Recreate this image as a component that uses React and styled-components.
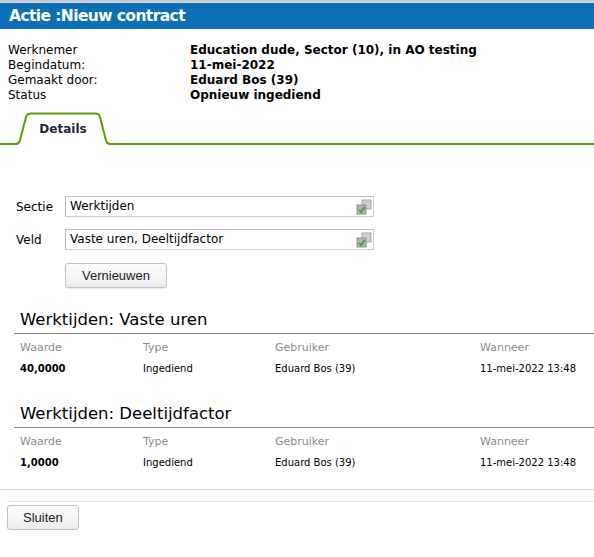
import React from 'react';
import styled, { createGlobalStyle } from 'styled-components';

const GlobalStyle = createGlobalStyle`
  html, body {
    margin: 0;
    padding: 0;
    background: #ffffff;
  }
  body {
    font-family: "DejaVu Sans", Verdana, sans-serif;
    font-size: 12px;
    color: #000000;
  }
`;

const Page = styled.div`
  width: 594px;
  border-top: 3px solid #c9ced4;
`;

const TitleBar = styled.div`
  height: 26px;
  background-color: #0b71b4;
  color: #ffffff;
  font-family: "DejaVu Sans", sans-serif;
  font-weight: bold;
  font-size: 15.5px;
  letter-spacing: -0.6px;
  line-height: 26px;
  padding-left: 9px;
`;

const InfoGrid = styled.div`
  display: grid;
  grid-template-columns: 182px 1fr;
  padding: 14px 8px 0;
  line-height: 15px;
`;

const InfoLabel = styled.div``;

const InfoValue = styled.div`
  font-weight: bold;
`;

const TabStrip = styled.div`
  display: flex;
  align-items: flex-end;
  height: 33px;
  margin-top: 9px;
`;

const TabLine = styled.div`
  flex: ${p => (p.$grow ? 1 : 'none')};
  width: ${p => (p.$grow ? 'auto' : '15px')};
  border-bottom: 2px solid #5e9b0d;
`;

const Tab = styled.div`
  position: relative;
  width: 95px;
  height: 33px;
  display: flex;
  align-items: center;
  justify-content: center;
  font-weight: bold;
  font-size: 12px;
  color: #222833;

  svg {
    position: absolute;
    inset: 0;
  }
`;

const TabLabel = styled.span`
  position: relative;
  margin-left: 1px;
`;

const Form = styled.div`
  padding: 51px 0 0 16px;
  display: flex;
  flex-direction: column;
  gap: 12px;
`;

const FieldRow = styled.div`
  display: flex;
  align-items: center;
`;

const FieldLabel = styled.label`
  width: 49px;
`;

const FieldBox = styled.div`
  position: relative;
  width: 309px;
  height: 21px;
  box-sizing: border-box;
  border: 1px solid #cfcfcf;
  border-left-color: #b9b9b9;
  border-top-color: #bdbdbd;
  padding: 2px 0 0 4px;
  line-height: 14px;
`;

const PickIcon = styled.svg`
  position: absolute;
  right: 1px;
  bottom: 1px;
`;

const Button = styled.button`
  font-family: "Liberation Sans", Arial, sans-serif;
  font-size: 13px;
  color: #222;
  height: 25px;
  padding: 0 ${p => p.$pad || 15}px;
  border: 1px solid #c4c4c4;
  border-radius: 3px;
  background: linear-gradient(#fdfdfd, #ececec);
  box-shadow: 0 1px 1px rgba(0, 0, 0, 0.08);
  cursor: pointer;
`;

const ButtonRow = styled.div`
  padding-left: 49px;
  margin-top: 1px;
`;

const Section = styled.div`
  margin: ${p => p.$top}px 0 0 14px;
`;

const SectionTitle = styled.div`
  font-family: "DejaVu Sans", sans-serif;
  font-size: 16.5px;
  line-height: 20px;
  padding-left: 6px;
  padding-bottom: 3px;
  border-bottom: 1px solid #8a8a8a;
`;

const HistRow = styled.div`
  display: grid;
  grid-template-columns: 123px 132px 205px 1fr;
  padding-left: 6px;
  font-size: ${p => (p.$head ? 11 : 10)}px;
  color: ${p => (p.$head ? '#8b8b8b' : '#000')};
  line-height: ${p => (p.$head ? 14 : 13)}px;
  margin-top: 7px;
`;

const Cell = styled.div`
  font-weight: ${p => (p.$bold ? 'bold' : 'normal')};
`;

const Footer = styled.div`
  margin-top: 20px;
  border-top: 1px solid #d2d2d2;
  padding: 11px 0 0 7px;
`;

const FooterInner = styled.div`
  border-top: 1px solid #e2e2e2;
  padding-top: 3px;
`;

function PickerGlyph() {
  return (
    <PickIcon width="16" height="16" viewBox="0 0 16 16">
      <rect x="6" y="1" width="9" height="9" fill="#cfcfcf" stroke="#a9a9a9" />
      <rect x="1" y="6" width="9" height="9" fill="#b3b3b3" stroke="#8e8e8e" />
      <path d="M3 11 L5 13 L8.5 8" fill="none" stroke="#2fa52b" strokeWidth="1.6" />
    </PickIcon>
  );
}

const info = [
  ['Werknemer', 'Education dude, Sector (10), in AO testing'],
  ['Begindatum:', '11-mei-2022'],
  ['Gemaakt door:', 'Eduard Bos (39)'],
  ['Status', 'Opnieuw ingediend'],
];

const history = [
  { title: 'Werktijden: Vaste uren', value: '40,0000', top: 22 },
  { title: 'Werktijden: Deeltijdfactor', value: '1,0000', top: 29 },
];

export default function App() {
  return (
    <Page>
      <GlobalStyle />
      <TitleBar>Actie :Nieuw contract</TitleBar>

      <InfoGrid>
        {info.map(([label, value]) => (
          <React.Fragment key={label}>
            <InfoLabel>{label}</InfoLabel>
            <InfoValue>{value}</InfoValue>
          </React.Fragment>
        ))}
      </InfoGrid>

      <TabStrip>
        <TabLine />
        <Tab>
          <svg width="95" height="33" viewBox="0 0 95 33">
            <path
              d="M0 32 H1 Q4 32 5 28.5 L11 5 Q12 1.5 16 1.5 H80 Q84 1.5 85 5 L91 28.5 Q92 32 95 32"
              fill="#ffffff"
              stroke="#5e9b0d"
              strokeWidth="2"
            />
          </svg>
          <TabLabel>Details</TabLabel>
        </Tab>
        <TabLine $grow />
      </TabStrip>

      <Form>
        <FieldRow>
          <FieldLabel>Sectie</FieldLabel>
          <FieldBox>
            Werktijden
            <PickerGlyph />
          </FieldBox>
        </FieldRow>
        <FieldRow>
          <FieldLabel>Veld</FieldLabel>
          <FieldBox>
            Vaste uren, Deeltijdfactor
            <PickerGlyph />
          </FieldBox>
        </FieldRow>
        <ButtonRow>
          <Button $pad={16}>Vernieuwen</Button>
        </ButtonRow>
      </Form>

      {history.map(h => (
        <Section key={h.title} $top={h.top}>
          <SectionTitle>{h.title}</SectionTitle>
          <HistRow $head>
            <Cell>Waarde</Cell>
            <Cell>Type</Cell>
            <Cell>Gebruiker</Cell>
            <Cell>Wanneer</Cell>
          </HistRow>
          <HistRow>
            <Cell $bold>{h.value}</Cell>
            <Cell>Ingediend</Cell>
            <Cell>Eduard Bos (39)</Cell>
            <Cell>11-mei-2022 13:48</Cell>
          </HistRow>
        </Section>
      ))}

      <Footer>
        <FooterInner>
          <Button $pad={15}>Sluiten</Button>
        </FooterInner>
      </Footer>
    </Page>
  );
}
